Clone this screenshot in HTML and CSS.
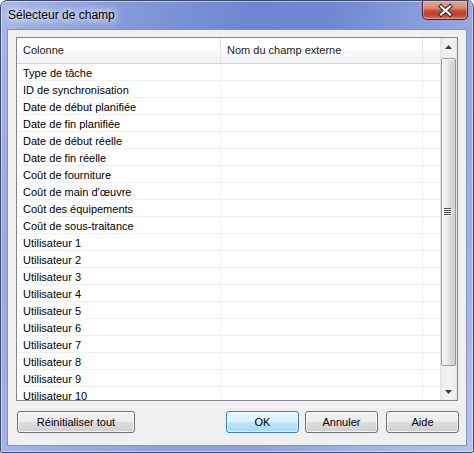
FILE: index.html
```html
<!DOCTYPE html>
<html lang="fr">
<head>
<meta charset="utf-8">
<title>Sélecteur de champ</title>
<link rel="stylesheet" href="styles.css">
</head>
<body>
<div class="window">
  <div class="titlebar">
    <span class="title">Sélecteur de champ</span>
    <div class="close">
      <svg width="44" height="17" viewBox="0 0 44 17">
        <path d="M18 4.5 L27 12.5 M27 4.5 L18 12.5" stroke="#3a2a2a" stroke-width="4.2" stroke-linecap="square" fill="none"/>
        <path d="M18 4.5 L27 12.5 M27 4.5 L18 12.5" stroke="#ffffff" stroke-width="2.2" stroke-linecap="square" fill="none"/>
      </svg>
    </div>
  </div>
  <div class="client">
    <div class="list">
      <div class="table">
        <div class="row header">
          <div class="cell c1">Colonne</div>
          <div class="cell c2">Nom du champ externe</div>
          <div class="cell c3"></div>
        </div>
        <div class="row"><div class="cell c1">Type de tâche</div><div class="cell c2"></div><div class="cell c3"></div></div>
        <div class="row"><div class="cell c1">ID de synchronisation</div><div class="cell c2"></div><div class="cell c3"></div></div>
        <div class="row"><div class="cell c1">Date de début planifiée</div><div class="cell c2"></div><div class="cell c3"></div></div>
        <div class="row"><div class="cell c1">Date de fin planifiée</div><div class="cell c2"></div><div class="cell c3"></div></div>
        <div class="row"><div class="cell c1">Date de début réelle</div><div class="cell c2"></div><div class="cell c3"></div></div>
        <div class="row"><div class="cell c1">Date de fin réelle</div><div class="cell c2"></div><div class="cell c3"></div></div>
        <div class="row"><div class="cell c1">Coût de fourniture</div><div class="cell c2"></div><div class="cell c3"></div></div>
        <div class="row"><div class="cell c1">Coût de main d'œuvre</div><div class="cell c2"></div><div class="cell c3"></div></div>
        <div class="row"><div class="cell c1">Coût des équipements</div><div class="cell c2"></div><div class="cell c3"></div></div>
        <div class="row"><div class="cell c1">Coût de sous-traitance</div><div class="cell c2"></div><div class="cell c3"></div></div>
        <div class="row"><div class="cell c1">Utilisateur 1</div><div class="cell c2"></div><div class="cell c3"></div></div>
        <div class="row"><div class="cell c1">Utilisateur 2</div><div class="cell c2"></div><div class="cell c3"></div></div>
        <div class="row"><div class="cell c1">Utilisateur 3</div><div class="cell c2"></div><div class="cell c3"></div></div>
        <div class="row"><div class="cell c1">Utilisateur 4</div><div class="cell c2"></div><div class="cell c3"></div></div>
        <div class="row"><div class="cell c1">Utilisateur 5</div><div class="cell c2"></div><div class="cell c3"></div></div>
        <div class="row"><div class="cell c1">Utilisateur 6</div><div class="cell c2"></div><div class="cell c3"></div></div>
        <div class="row"><div class="cell c1">Utilisateur 7</div><div class="cell c2"></div><div class="cell c3"></div></div>
        <div class="row"><div class="cell c1">Utilisateur 8</div><div class="cell c2"></div><div class="cell c3"></div></div>
        <div class="row"><div class="cell c1">Utilisateur 9</div><div class="cell c2"></div><div class="cell c3"></div></div>
        <div class="row"><div class="cell c1">Utilisateur 10</div><div class="cell c2"></div><div class="cell c3"></div></div>
      </div>
      <div class="scrollbar">
        <div class="sb-btn">
          <svg width="7" height="4" viewBox="0 0 7 4"><path d="M0 4 L3.5 0 L7 4 Z" fill="#3c3c3c"/></svg>
        </div>
        <div class="thumb">
          <svg width="8" height="8" viewBox="0 0 8 8">
            <rect x="0" y="0" width="7" height="1" fill="#4d4d4d"/>
            <rect x="1" y="1" width="7" height="1" fill="#ffffff"/>
            <rect x="0" y="2" width="7" height="1" fill="#4d4d4d"/>
            <rect x="1" y="3" width="7" height="1" fill="#ffffff"/>
            <rect x="0" y="4" width="7" height="1" fill="#4d4d4d"/>
            <rect x="1" y="5" width="7" height="1" fill="#ffffff"/>
            <rect x="0" y="6" width="7" height="1" fill="#4d4d4d"/>
            <rect x="1" y="7" width="7" height="1" fill="#ffffff"/>
          </svg>
        </div>
        <div class="sb-btn down">
          <svg width="7" height="4" viewBox="0 0 7 4"><path d="M0 0 L7 0 L3.5 4 Z" fill="#3c3c3c"/></svg>
        </div>
      </div>
    </div>
    <div class="buttons">
      <button class="btn wide">Réinitialiser tout</button>
      <div class="spacer"></div>
      <button class="btn default">OK</button>
      <button class="btn">Annuler</button>
      <button class="btn last">Aide</button>
    </div>
  </div>
</div>
</body>
</html>
```

FILE: styles.css
```css
* { box-sizing: border-box; }

html, body {
  margin: 0;
  padding: 0;
  background: #ffffff;
}

.window {
  width: 474px;
  height: 453px;
  border: 1px solid #3f4a66;
  border-radius: 7px 7px 2px 2px;
  background:
    linear-gradient(to bottom, rgba(255,255,255,0) 0%, rgba(255,255,255,0) 60%, rgba(200,215,245,0.35) 100%),
    linear-gradient(100deg, #a7b6e7 0%, #8a9edc 18%, #6e86d0 45%, #6f87d1 60%, #8fa3de 82%, #a9b9e9 100%);
  box-shadow: inset 0 0 0 1px rgba(255,255,255,0.45);
  font-family: "Liberation Sans", Arial, sans-serif;
  display: flex;
  flex-direction: column;
}

.titlebar {
  height: 28px;
  display: flex;
  justify-content: space-between;
  align-items: flex-start;
}

.title {
  padding: 7px 0 0 7px;
  font-size: 12px;
  line-height: 15px;
  color: #000000;
  text-shadow: 0 0 6px #ffffff, 0 0 10px rgba(255,255,255,0.9), 0 0 14px rgba(255,255,255,0.8);
}

.close {
  width: 46px;
  height: 19px;
  margin-right: 5px;
  border: 1px solid #4b2020;
  border-top: none;
  border-radius: 0 0 5px 5px;
  background: linear-gradient(to bottom, #e6a592 0%, #d98673 40%, #c44a36 55%, #bd3f2e 75%, #d5735c 100%);
  box-shadow: inset 0 0 0 1px rgba(255,210,200,0.45);
  display: flex;
  align-items: center;
  justify-content: center;
}

.close svg { display: block; }

.client {
  margin: 0 6px 6px 6px;
  height: 417px;
  border: 1px solid #8292bd;
  background: #f0f0f0;
  padding: 7px 8px 0 8px;
  display: flex;
  flex-direction: column;
}

.list {
  height: 364px;
  border: 1px solid #828790;
  background: #ffffff;
  display: flex;
}

.table {
  flex: 1;
  overflow: hidden;
  font-size: 11px;
  color: #000000;
}

.row {
  display: flex;
  height: 17px;
  border-bottom: 1px solid #f0f0f0;
}

.cell {
  height: 100%;
  padding-left: 6px;
  padding-top: 1px;
  line-height: 16px;
  white-space: nowrap;
  border-right: 1px solid #f0f0f0;
}

.c1 { width: 204px; }
.c2 { width: 202px; }
.c3 { flex: 1; border-right: none; }

.row.header {
  height: 26px;
  border-bottom: 1px solid #d5d5d5;
  background: linear-gradient(to bottom, #ffffff 0%, #ffffff 45%, #f6f7f8 55%, #f3f4f6 100%);
}

.header .cell {
  padding-top: 0;
  line-height: 25px;
  color: #1c1c1c;
  border-right: 1px solid #e3e6ea;
}

.header .c3 { border-right: none; }

.scrollbar {
  width: 17px;
  display: flex;
  flex-direction: column;
  background: linear-gradient(to right, #e2e2e2 0%, #efefef 15%, #f3f3f3 50%, #efefef 85%, #e6e6e6 100%);
}

.sb-btn {
  height: 17px;
  display: flex;
  align-items: center;
  justify-content: center;
}

.sb-btn svg { display: block; }

.sb-btn.down { margin-top: auto; }

.thumb {
  margin: 3px 1px 0 1px;
  height: 308px;
  border: 1px solid #9a9a9a;
  border-radius: 2px;
  background: linear-gradient(to right, #f6f6f6 0%, #ececec 40%, #dcdcdc 60%, #d0d0d0 100%);
  box-shadow: inset 1px 1px 0 #ffffff;
  display: flex;
  align-items: center;
  justify-content: center;
}

.thumb svg { display: block; margin-left: -2px; }

.buttons {
  margin: 10px -1px 0 1px;
  display: flex;
  gap: 7px;
}

.spacer { flex: 1; }

.btn {
  height: 22px;
  width: 73px;
  padding: 0;
  border: 1px solid #707070;
  border-radius: 3px;
  background: linear-gradient(to bottom, #f2f2f2 0%, #ebebeb 50%, #dddddd 51%, #cfcfcf 100%);
  box-shadow: inset 0 0 0 1px rgba(255,255,255,0.75);
  font-family: "Liberation Sans", Arial, sans-serif;
  font-size: 11px;
  color: #000000;
  line-height: 20px;
  text-align: center;
}

.btn.wide { width: 118px; }

.btn.default {
  border-color: #3c7fb1;
  background: linear-gradient(to bottom, #eaf6fd 0%, #d9f0fc 50%, #bee6fd 51%, #a7d9f5 100%);
  box-shadow: inset 0 0 0 1px rgba(255,255,255,0.6);
  margin-right: -1px;
}

.btn.last { margin-left: 1px; }
```
